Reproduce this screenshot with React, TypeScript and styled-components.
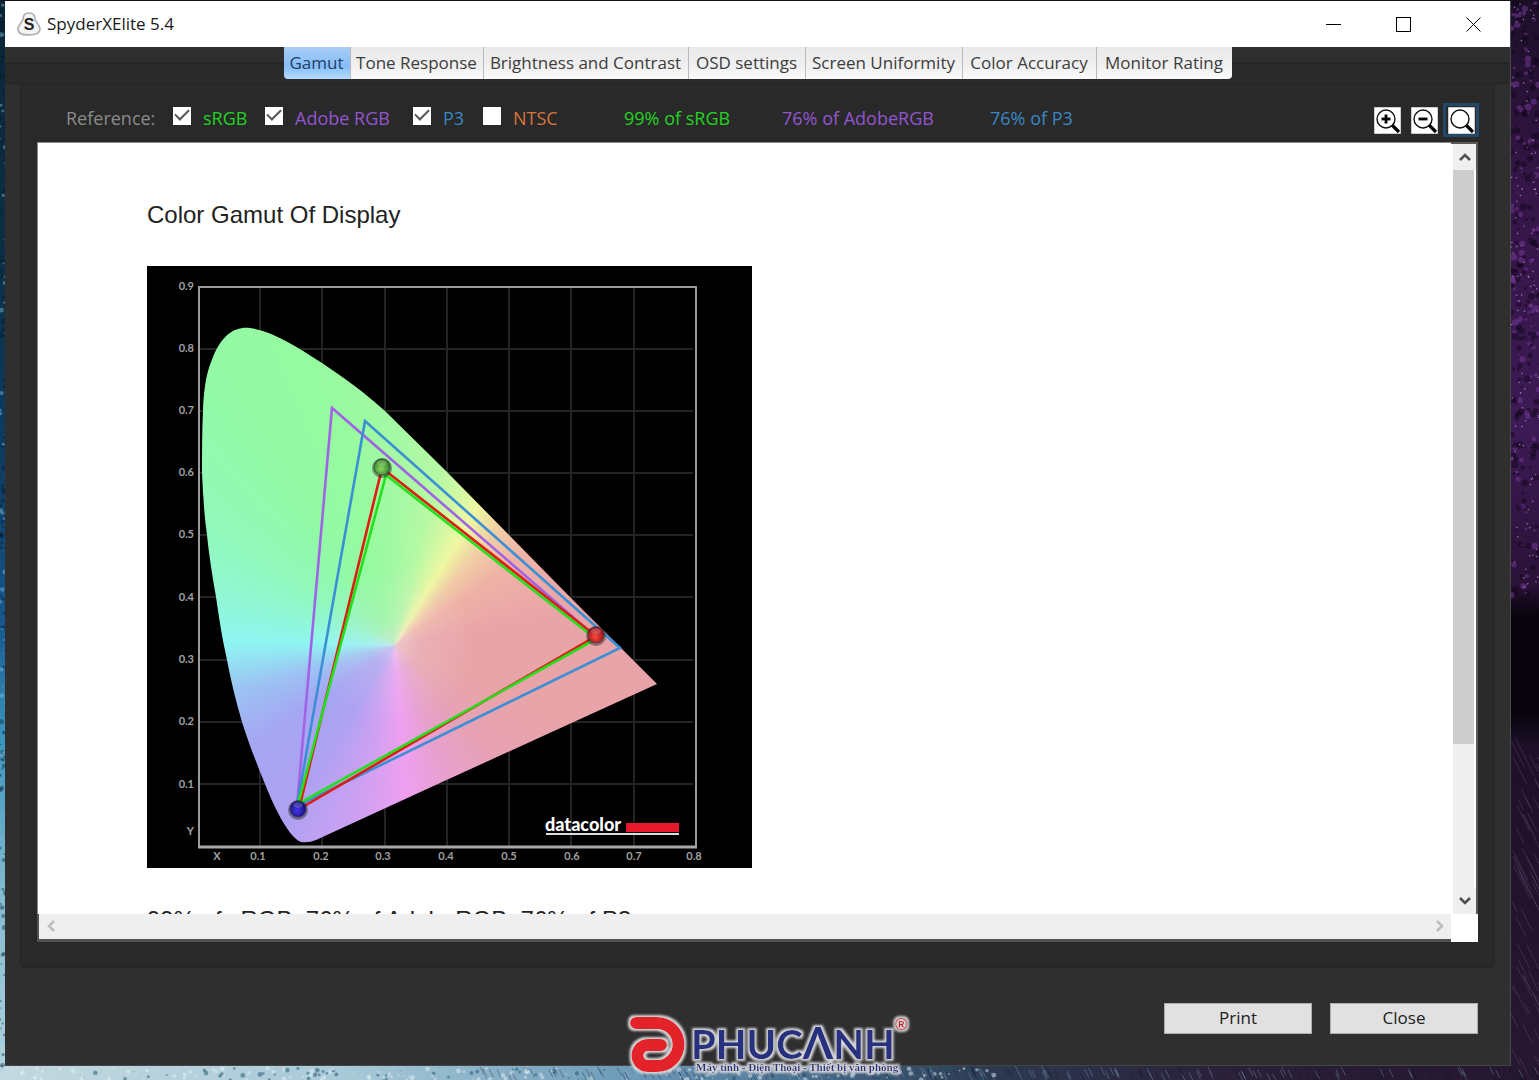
import React, { useState } from 'react';
import styled, { createGlobalStyle } from 'styled-components';

const UI_FONT = '"Open Sans", "Noto Sans", sans-serif';
const DOC_FONT = '"Liberation Sans", Arial, sans-serif';

const GlobalStyle = createGlobalStyle`
  *, *::before, *::after { box-sizing: border-box; }
  body { margin: 0; background: #16101f; }
  button, input { font: inherit; margin: 0; }
`;

/* ---------- desktop ---------- */

const Desktop = styled.div`
  position: relative;
  display: flex;
  min-height: 100vh;
  padding: 1px 28px 14px 5px;
  overflow: hidden;
  font-family: ${UI_FONT};
  font-size: 17px;
  line-height: 24px;
  background:
    linear-gradient(#12101a, #1a1420) top / 100% 1px no-repeat,
    linear-gradient(90deg, #c3d8e0 0%, #a9cad8 22%, #6f9dba 40%, #4a6f8f 52%, #2c3a52 64%, #2a2038 80%, #24162f 100%) bottom / 100% 14px no-repeat,
    linear-gradient(#0b2436 0%, #0c3048 25%, #0f3e66 45%, #17598f 58%, #3a94bd 68%, #7fb9cf 82%, #b3d3dd 100%) left / 6px 100% no-repeat,
    linear-gradient(#1c0f28 0%, #351648 18%, #3c1a54 40%, #2a1238 54%, #08040d 57%, #07040c 66%, #1d1028 69%, #28182f 100%) right / 30px 100% no-repeat;
`;

const Wallpaper = styled.svg`
  position: absolute;
  inset: 0;
  width: 100%;
  height: 100%;
`;

const Frame = styled.main`
  position: relative;
  flex: 1;
  display: flex;
  flex-direction: column;
  background: #2f2f2f;
  border-right: 1px solid #4a4a4a;
  border-bottom: 1px solid #454545;
`;

/* ---------- title bar ---------- */

const TitleBar = styled.header`
  display: flex;
  align-items: center;
  height: 46px;
  padding: 0 2px 0 12px;
  background: #fff;
  color: #1a1a1a;
`;

const AppTitle = styled.h1`
  flex: 1;
  margin: 0 0 0 6px;
  font-size: 17px;
  font-weight: 400;
  line-height: 24px;
`;

const CaptionButton = styled.button`
  display: grid;
  place-items: center;
  width: 70px;
  height: 46px;
  padding: 0;
  border: 0;
  background: transparent;
`;

/* ---------- tabs ---------- */

const TabStrip = styled.nav`
  display: flex;
  justify-content: center;
  height: 37px;
  background: linear-gradient(#2f2f2f 0 15px, #252525 15px 17px, #2a2a2a 17px);
  border-bottom: 1px solid #252525;
`;

const TabGroup = styled.div`
  display: flex;
  height: 32px;
  border-radius: 0 0 4px 4px;
  overflow: hidden;
`;

const Tab = styled.button<{ $width: number; $active: boolean }>`
  width: ${(p) => p.$width}px;
  padding: 0;
  border: 0;
  border-right: 1px solid #b9b9b9;
  white-space: nowrap;
  color: ${(p) => (p.$active ? '#1f3f68' : '#3c3c3c')};
  background: ${(p) =>
    p.$active
      ? 'linear-gradient(#a9cdf5, #86bdf8 60%, #b4dcff)'
      : 'linear-gradient(#e9e9e9, #f0f0f0 60%, #fbfbfb)'};
  &:last-child { border-right: 0; }
`;

/* ---------- panel ---------- */

const Panel = styled.section`
  flex: 1;
  display: flex;
  flex-direction: column;
  margin: 0 15px;
  padding: 0 16px 25px;
  background: #292929;
  border: 1px solid #252525;
  border-top: 0;
  border-radius: 0 0 6px 6px;
`;

const Toolbar = styled.div`
  display: flex;
  align-items: center;
  height: 58px;
  padding: 10px 0 0 29px;
  font-size: 18px;
`;

const ToolbarLabel = styled.span`
  width: 107px;
  color: #8b8b8b;
`;

const Reference = styled.label<{ $color: string; $width: number }>`
  display: flex;
  align-items: center;
  gap: 12px;
  width: ${(p) => p.$width}px;
  color: ${(p) => p.$color};
  white-space: nowrap;
`;

const Tick = styled.input`
  appearance: none;
  display: grid;
  justify-content: center;
  width: 18px;
  height: 18px;
  margin-bottom: 5px;
  background: #fff;
  &:checked::before {
    content: '';
    width: 14px;
    height: 8px;
    margin-top: 2px;
    border: solid #555;
    border-width: 0 0 2px 2px;
    transform: rotate(-45deg);
  }
`;

const Coverage = styled.output<{ $color: string; $width: number }>`
  width: ${(p) => p.$width}px;
  color: ${(p) => p.$color};
  white-space: nowrap;
`;

const ZoomGroup = styled.div`
  display: flex;
  gap: 1px;
  margin: 4px -1px 0 auto;
`;

const ZoomButton = styled.button<{ $focused?: boolean }>`
  display: grid;
  place-items: center;
  width: 36px;
  height: 34px;
  padding: 0;
  border: 3px solid ${(p) => (p.$focused ? '#24486a' : 'transparent')};
  background: transparent;
`;

/* ---------- document viewer ---------- */

const Viewer = styled.div`
  flex: 1;
  display: grid;
  grid-template: minmax(0, 1fr) 28px / minmax(0, 1fr) 27px;
  min-height: 400px;
  background: #fff;
`;

const Page = styled.article`
  height: 0;
  min-height: 100%;
  padding: 58px 0 0 109px;
  overflow: hidden;
  border: solid #8a8a8a;
  border-width: 1px 0 0 1px;
  font-family: ${DOC_FONT};
  font-size: 24px;
  line-height: 28px;
  color: #222;
`;

const PageTitle = styled.h2`
  margin: 0 0 37px;
  font-size: 24px;
  font-weight: 400;
  line-height: 28px;
`;

const Chart = styled.svg`
  display: block;
  width: 605px;
  height: 602px;
  margin-bottom: 38px;
  background: #000;
`;

const Summary = styled.p`
  margin: 0;
  white-space: nowrap;
`;

const ScrollColumn = styled.div`
  display: flex;
  flex-direction: column;
  border: solid #5a5a5a;
  border-width: 2px 2px 0 0;
  padding: 0 2px;
`;

const ScrollRow = styled.div`
  display: flex;
  justify-content: space-between;
  background: #efefef;
  border: solid #505050;
  border-width: 0 0 3px 2px;
  & > button { height: 24px; }
`;

const ScrollButton = styled.button`
  display: grid;
  place-items: center;
  width: 23px;
  height: 26px;
  padding: 0;
  border: 0;
  background: #efefef;
`;

const Track = styled.div`
  flex: 1;
  background: #efefef;
`;

const Thumb = styled.div`
  height: 80%;
  background: #cdcdcd;
`;

/* ---------- footer ---------- */

const Footer = styled.footer`
  display: flex;
  justify-content: flex-end;
  gap: 18px;
  padding: 35px 32px 31px;
`;

const ActionButton = styled.button`
  width: 148px;
  height: 31px;
  padding: 0 0 2px;
  border: 1px solid #adadad;
  background: #e1e1e1;
  color: #222;
`;

const Watermark = styled.svg`
  position: absolute;
  left: 50%;
  bottom: 0;
  width: 300px;
  height: 76px;
  margin-left: -150px;
`;

/* ---------- data ---------- */

const TABS = [
  { name: 'Gamut', width: 67 },
  { name: 'Tone Response', width: 133 },
  { name: 'Brightness and Contrast', width: 205 },
  { name: 'OSD settings', width: 117 },
  { name: 'Screen Uniformity', width: 157 },
  { name: 'Color Accuracy', width: 134 },
  { name: 'Monitor Rating', width: 135 },
];

const REFERENCES = [
  { name: 'sRGB', color: '#22d322', width: 92, on: true },
  { name: 'Adobe RGB', color: '#9355d0', width: 148, on: true },
  { name: 'P3', color: '#3a87c4', width: 70, on: true },
  { name: 'NTSC', color: '#d8733c', width: 141, on: false },
];

const COVERAGES = [
  { text: '99% of sRGB', color: '#22d322', width: 158 },
  { text: '76% of AdobeRGB', color: '#9355d0', width: 208 },
  { text: '76% of P3', color: '#3a87c4', width: 100 },
];

const X_LINES = [260, 322, 385, 447, 509, 571, 634];
const Y_LINES = [349, 411, 473, 535, 597, 660, 722, 784];
const X_LABELS: [number, string][] = [
  [217, 'X'], [258, '0.1'], [321, '0.2'], [383, '0.3'], [446, '0.4'],
  [509, '0.5'], [572, '0.6'], [634, '0.7'], [694, '0.8'],
];
const Y_LABELS: [number, string][] = [
  [286, '0.9'], [348, '0.8'], [410, '0.7'], [472, '0.6'], [534, '0.5'],
  [597, '0.4'], [659, '0.3'], [721, '0.2'], [784, '0.1'], [831, 'Y'],
];

const LOCUS =
  'M301 842 C290 838 276 812 265 784 C254 757 248 741 242 722 C236 702 231 681 227 660 ' +
  'C222 638 219 618 216 597 C212 574 209 555 207 535 C204 514 203 494 202 473 ' +
  'C202 452 202 431 203 411 C204 385 207 371 213 357 C222 334 236 326 250 328 ' +
  'C272 331 296 346 322 363 C346 379 365 393 385 411 L447 472 L509 535 L563 590 L657 684 ' +
  'L440 783 L316 840 Q309 843 301 842 Z';

const HUE_WHEEL =
  'radial-gradient(circle at 248px 379px, rgba(240,225,235,.55) 0, rgba(240,225,235,.2) 25px, rgba(240,225,235,0) 80px),' +
  'conic-gradient(from 0deg at 248px 379px, #a4f9a4 0deg, #b6f9a4 14deg, #eef7a2 31deg, #f1cda6 42deg, ' +
  '#efb2a6 55deg, #e9a4a8 80deg, #e8a4a8 115deg, #e7a2b4 138deg, #e7a0cc 158deg, #ee9ff0 176deg, ' +
  '#d0a0f2 192deg, #aea1f2 212deg, #a5a6f3 235deg, #9cc2f3 254deg, #8ff5f2 271deg, #90f7d6 285deg, ' +
  '#91f8bc 302deg, #92f9a6 325deg, #96fa9f 345deg, #a4f9a4 360deg)';

/* ---------- drawings ---------- */

function random(seed: number) {
  let s = seed;
  return () => {
    s = (s * 16807) % 2147483647;
    return s / 2147483647;
  };
}

function Drops() {
  const next = random(77);
  const left = Array.from({ length: 170 }, () => ({ x: next() * 5, y: next() * 1080, r: 0.5 + next() * 2 }));
  const right = Array.from({ length: 420 }, () => ({ x: 1511 + next() * 28, y: next() * 605, r: 0.5 + next() * 3 }));
  const rays = Array.from({ length: 60 }, () => ({ x: 1511 + next() * 28, y: 730 + next() * 350, l: 8 + next() * 30 }));
  const bottom = Array.from({ length: 240 }, () => ({ x: next() * 1000, y: 1068 + next() * 12, r: 0.5 + next() * 2 }));
  const streaks = Array.from({ length: 260 }, () => ({ x: 480 + next() * 1060, y: 1066 + next() * 8 }));
  return (
    <Wallpaper viewBox="0 0 1539 1080" preserveAspectRatio="none" aria-hidden="true">
      {left.map((d, i) => (
        <circle key={'l' + i} cx={d.x} cy={d.y} r={d.r} fill={i % 3 ? '#061a2a' : '#8fd0ea'} opacity={0.4} />
      ))}
      {right.map((d, i) => (
        <circle
          key={'r' + i}
          cx={d.x}
          cy={d.y}
          r={i % 4 === 0 ? 0.8 : d.r}
          fill={i % 4 === 0 ? '#c79be0' : i % 4 === 1 ? '#7a3a9c' : '#12061a'}
          opacity={i % 4 === 0 ? 0.7 : 0.5}
        />
      ))}
      {rays.map((d, i) => (
        <line key={'y' + i} x1={d.x} y1={d.y} x2={d.x + d.l / 2} y2={d.y + d.l} stroke="#6d5480" opacity={0.35} />
      ))}
      {bottom.map((d, i) => (
        <circle key={'b' + i} cx={d.x} cy={d.y} r={d.r} fill={i % 3 === 0 ? '#1c5468' : '#e4f2f7'} opacity={0.5} />
      ))}
      {streaks.map((d, i) => (
        <line key={'s' + i} x1={d.x} y1={d.y} x2={d.x + 4} y2={d.y + 8} stroke={i % 2 ? '#8fb0cc' : '#141024'} opacity={0.35} />
      ))}
    </Wallpaper>
  );
}

function AppIcon() {
  return (
    <svg width="24" height="26" viewBox="0 0 24 26" aria-hidden="true">
      <path
        d="M12 2 C16 2 18 4 18 8 C18 11 23 13 23 18 C23 22 20 24 12 24 C4 24 1 22 1 18 C1 13 6 11 6 8 C6 4 8 2 12 2 Z"
        fill="#f4f4f4"
        stroke="#aeaeae"
        strokeWidth="1.6"
      />
      <text x="12" y="19" textAnchor="middle" fontFamily={DOC_FONT} fontSize="16" fontWeight="700" fill="#222">
        S
      </text>
    </svg>
  );
}

function Magnifier({ sign }: { sign?: '+' | '-' }) {
  return (
    <svg width="27" height="27" viewBox="0 0 27 27" aria-hidden="true">
      <rect width="27" height="27" fill="#fff" stroke="#9a9a9a" />
      <circle cx="12" cy="12" r="9" fill="none" stroke="#111" strokeWidth="1.4" />
      <path d="M18 18 L25 25" stroke="#000" strokeWidth="3.2" />
      {sign && <path d="M7.5 12 H16.5" stroke="#000" strokeWidth="2.8" />}
      {sign === '+' && <path d="M12 7.5 V16.5" stroke="#000" strokeWidth="2.8" />}
    </svg>
  );
}

function Chevron({ turn, color }: { turn: number; color: string }) {
  return (
    <svg width="14" height="14" viewBox="0 0 14 14" aria-hidden="true">
      <path d="M2 10 L7 5 L12 10" transform={`rotate(${turn} 7 7)`} fill="none" stroke={color} strokeWidth="2.6" />
    </svg>
  );
}

function GamutChart() {
  return (
    <Chart viewBox="147 266 605 602" role="img" aria-label="Color gamut diagram">
      <defs>
        <clipPath id="locus">
          <path d={LOCUS} />
        </clipPath>
        {[
          ['ballG', '#8ad860', '#2c7a20'],
          ['ballR', '#ff4a3c', '#8e0f1c'],
          ['ballB', '#4a34ea', '#0c0c70'],
        ].map(([id, light, dark]) => (
          <radialGradient key={id} id={id} cx="45%" cy="60%" r="60%">
            <stop offset="0" stopColor={light} />
            <stop offset="1" stopColor={dark} />
          </radialGradient>
        ))}
      </defs>
      <g stroke="#242424" strokeWidth="2">
        {X_LINES.map((x) => (
          <line key={x} x1={x} x2={x} y1="288" y2="846" />
        ))}
        {Y_LINES.map((y) => (
          <line key={y} x1="199" x2="693" y1={y} y2={y} />
        ))}
      </g>
      <path d="M199 846 V287 H696 V847" fill="none" stroke="#9a9a9a" strokeWidth="2" />
      <path d="M198 847 H697" stroke="#a8a8a8" strokeWidth="3" />
      <g clipPath="url(#locus)">
        <foreignObject x="147" y="266" width="605" height="602">
          <div style={{ width: 605, height: 602, background: HUE_WHEEL }} />
        </foreignObject>
      </g>
      <g fill="none" strokeWidth="2.6" strokeLinejoin="miter">
        <path d="M596 637 L332 408 L297 806" stroke="#a063e6" />
        <path d="M365 421 L297 806 L620 648 Z" stroke="#3b8fd4" />
        <path d="M382 468 L299 809 L596 636 Z" stroke="#dd1d12" />
        <path d="M386 475 L298 804 L596 639 Z" stroke="#22e01c" />
      </g>
      {[
        [382, 467, 'ballG'],
        [596, 635, 'ballR'],
        [298, 809, 'ballB'],
      ].map(([x, y, id]) => (
        <g key={id}>
          <circle cx={x} cy={Number(y) + 1} r="10" fill="#222" opacity="0.45" />
          <circle cx={x} cy={y} r="8" fill={`url(#${id})`} stroke="#333" strokeOpacity="0.6" />
          <ellipse cx={x} cy={Number(y) - 4} rx="5" ry="3" fill="#fff" opacity="0.18" />
        </g>
      ))}
      <g fontFamily="Lato, sans-serif" fontSize="11" fontWeight="700" fill="#a0a0a0">
        {X_LABELS.map(([x, t]) => (
          <text key={t} x={x} y="860" textAnchor="middle">{t}</text>
        ))}
        {Y_LABELS.map(([y, t]) => (
          <text key={t} x="194" y={y + 4} textAnchor="end">{t}</text>
        ))}
      </g>
      <text x="545" y="831" fontFamily="Lato, sans-serif" fontSize="18" fontWeight="900" fill="#fff">datacolor</text>
      <rect x="626" y="823" width="53" height="9" fill="#e8192c" />
      <rect x="546" y="833" width="133" height="2" fill="#ddd" />
    </Chart>
  );
}

function Logo() {
  return (
    <Watermark viewBox="0 0 300 76" role="img" aria-label="Phuc Anh">
      <defs>
        <filter id="halo" x="-5%" y="-10%" width="110%" height="125%">
          <feMorphology in="SourceAlpha" operator="dilate" radius="2" result="grown" />
          <feGaussianBlur in="grown" stdDeviation="1" result="soft" />
          <feFlood floodColor="#d5d5d8" />
          <feComposite in2="soft" operator="in" result="glow" />
          <feMerge>
            <feMergeNode in="glow" />
            <feMergeNode in="SourceGraphic" />
          </feMerge>
        </filter>
      </defs>
      <g filter="url(#halo)">
        <path
          d="M16 19 H37 A21.5 21.5 0 0 1 37 62 H28 A10.5 10.5 0 0 1 28 41 H41"
          fill="none"
          stroke="#e4202a"
          strokeWidth="12"
          strokeLinecap="round"
        />
        <text x="71" y="55" fontFamily="Lato, sans-serif" fontSize="40" fontWeight="700" fill="#25307f">
          PHUC<tspan fontSize="44">Λ</tspan>NH
        </text>
        <text x="275" y="26" fontFamily={DOC_FONT} fontSize="17" fontWeight="700" fill="#c8252c">®</text>
        <text x="76" y="67" fontFamily='"Liberation Serif", serif' fontSize="11" fontWeight="700" fill="#25307f">
          Máy tính - Điện Thoại - Thiết bị văn phòng
        </text>
      </g>
    </Watermark>
  );
}

/* ---------- app ---------- */

export default function App() {
  const [active, setActive] = useState('Gamut');
  const [shown, setShown] = useState(REFERENCES.map((r) => r.on));

  return (
    <Desktop>
      <GlobalStyle />
      <Drops />
      <Frame>
        <TitleBar>
          <AppIcon />
          <AppTitle>SpyderXElite 5.4</AppTitle>
          <CaptionButton aria-label="Minimize">
            <svg width="15" height="15"><path d="M0 7.5 H15" stroke="#000" /></svg>
          </CaptionButton>
          <CaptionButton aria-label="Maximize">
            <svg width="15" height="15"><rect x="0.5" y="0.5" width="14" height="14" fill="none" stroke="#000" /></svg>
          </CaptionButton>
          <CaptionButton aria-label="Close window">
            <svg width="15" height="15"><path d="M0.5 0.5 L14.5 14.5 M14.5 0.5 L0.5 14.5" stroke="#000" /></svg>
          </CaptionButton>
        </TitleBar>
        <TabStrip>
          <TabGroup>
            {TABS.map((t) => (
              <Tab key={t.name} $width={t.width} $active={t.name === active} onClick={() => setActive(t.name)}>
                {t.name}
              </Tab>
            ))}
          </TabGroup>
        </TabStrip>
        <Panel>
          <Toolbar>
            <ToolbarLabel>Reference:</ToolbarLabel>
            {REFERENCES.map((r, i) => (
              <Reference key={r.name} $color={r.color} $width={r.width}>
                <Tick
                  type="checkbox"
                  checked={shown[i]}
                  onChange={() => setShown(shown.map((v, j) => (j === i ? !v : v)))}
                />
                {r.name}
              </Reference>
            ))}
            {COVERAGES.map((c) => (
              <Coverage key={c.text} $color={c.color} $width={c.width}>
                {c.text}
              </Coverage>
            ))}
            <ZoomGroup>
              <ZoomButton aria-label="Zoom in"><Magnifier sign="+" /></ZoomButton>
              <ZoomButton aria-label="Zoom out"><Magnifier sign="-" /></ZoomButton>
              <ZoomButton aria-label="Fit" $focused><Magnifier /></ZoomButton>
            </ZoomGroup>
          </Toolbar>
          <Viewer>
            <Page>
              <PageTitle>Color Gamut Of Display</PageTitle>
              <GamutChart />
              <Summary>99% of sRGB, 76% of AdobeRGB, 76% of P3</Summary>
            </Page>
            <ScrollColumn>
              <ScrollButton aria-label="Scroll up"><Chevron turn={0} color="#505050" /></ScrollButton>
              <Track><Thumb /></Track>
              <ScrollButton aria-label="Scroll down"><Chevron turn={180} color="#505050" /></ScrollButton>
            </ScrollColumn>
            <ScrollRow>
              <ScrollButton aria-label="Scroll left"><Chevron turn={-90} color="#bdbdbd" /></ScrollButton>
              <ScrollButton aria-label="Scroll right"><Chevron turn={90} color="#bdbdbd" /></ScrollButton>
            </ScrollRow>
          </Viewer>
        </Panel>
        <Footer>
          <ActionButton>Print</ActionButton>
          <ActionButton>Close</ActionButton>
        </Footer>
      </Frame>
      <Logo />
    </Desktop>
  );
}
